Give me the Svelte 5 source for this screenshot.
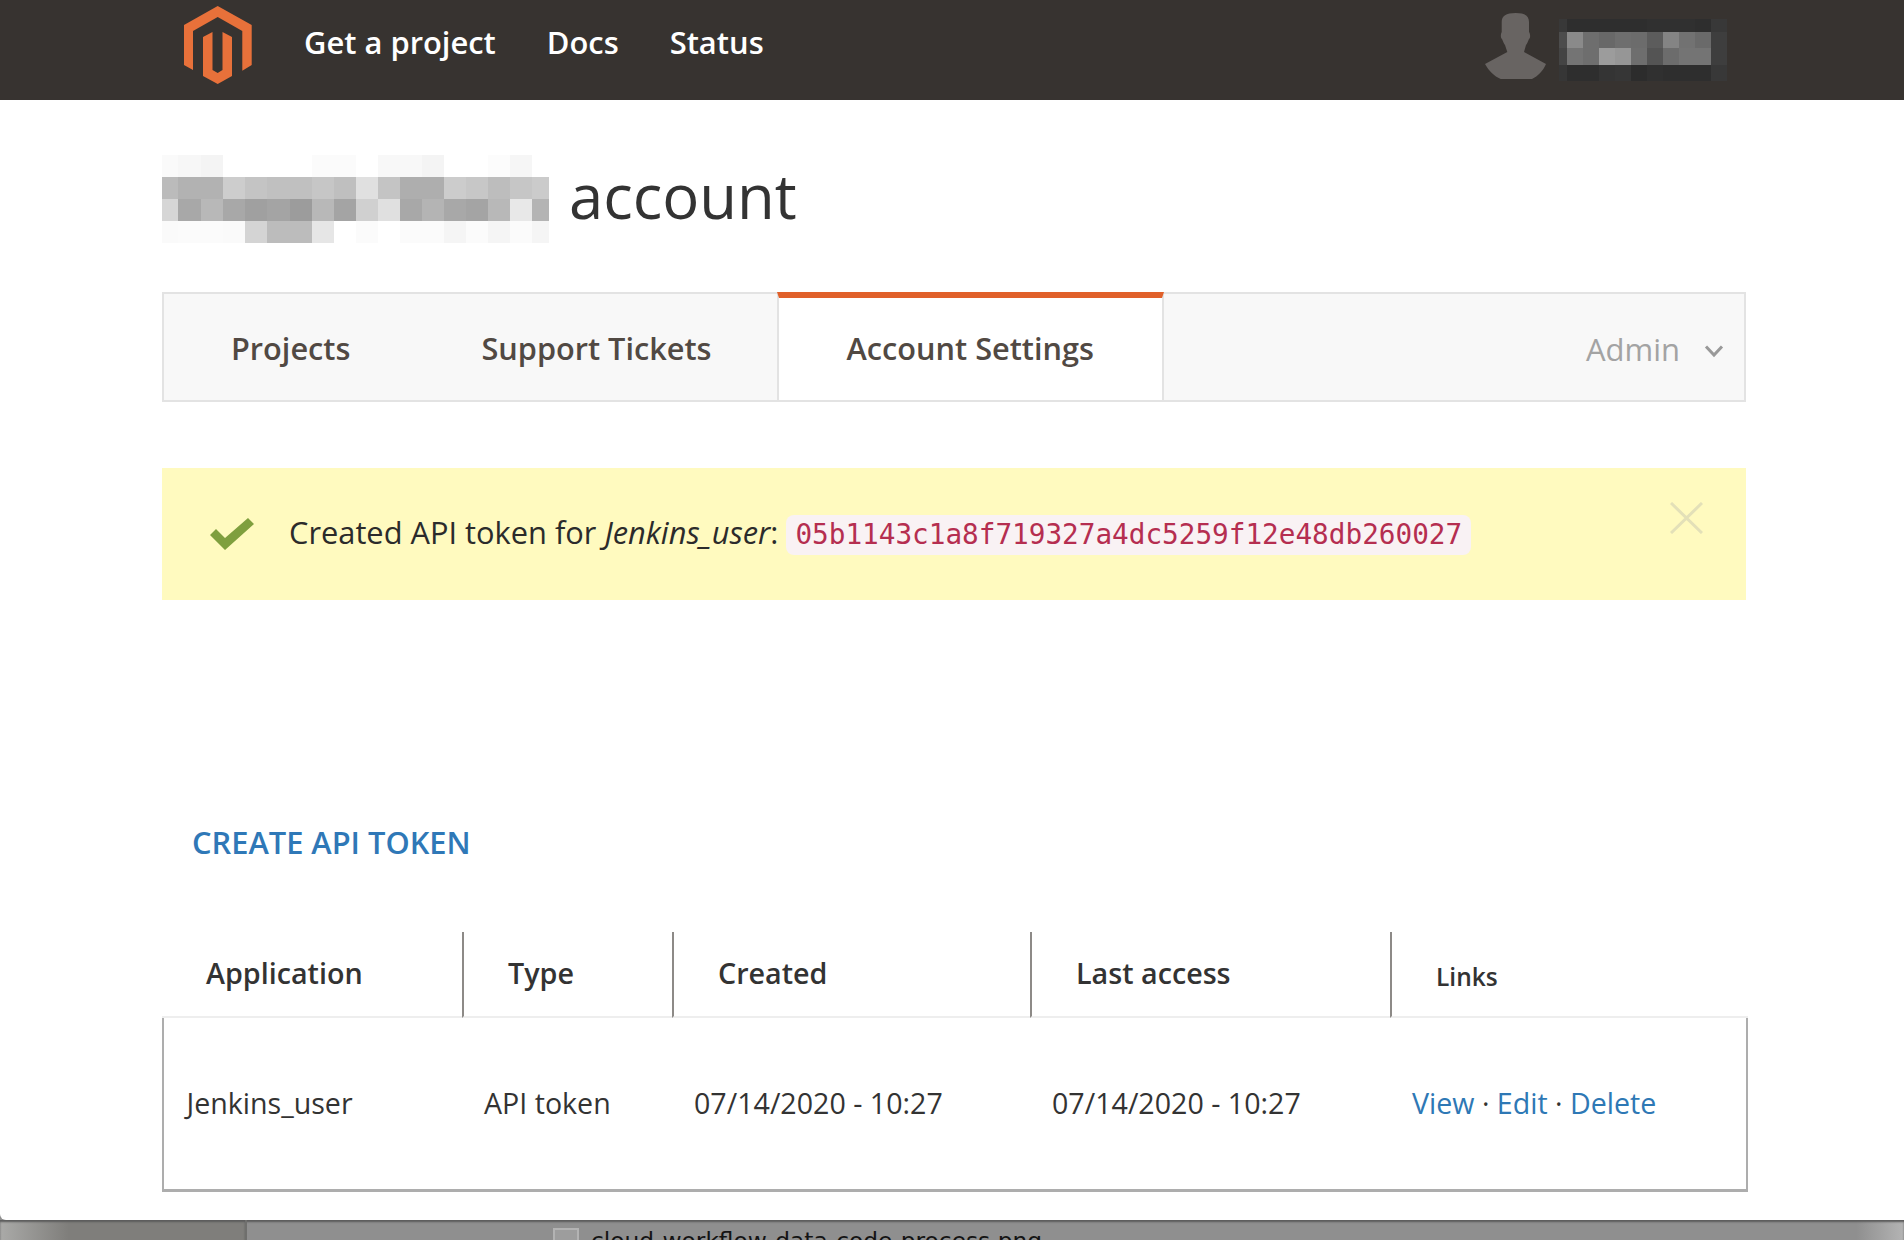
<script lang="ts">
	const navLinks = ['Get a project', 'Docs', 'Status'];

	// pixelated name that hides the account owner
	const mosaicCols = [16, 23, 22, 22, 22, 23, 22, 22, 22, 22, 22, 22, 22, 22, 22, 22, 22, 17];
	const mosaicRows = [
		['fa', 'f7', 'f4', 'ff', 'ff', 'ff', 'ff', 'fb', 'fb', 'ff', 'f8', 'f8', 'f4', 'ff', 'ff', 'fc', 'f6', 'ff'],
		['bb', 'b2', 'b2', 'cd', 'c4', 'c0', 'c0', 'c6', 'bf', 'e0', 'c4', 'ae', 'ae', 'cc', 'c7', 'bd', 'c6', 'cb'],
		['d6', 'a8', 'b8', 'a8', 'a0', 'a4', '9c', 'b8', 'a4', 'd0', 'e0', 'a8', 'b4', 'a8', 'a4', 'b8', 'e8', 'b4'],
		['fa', 'fb', 'fb', 'fa', 'd4', 'bc', 'bc', 'e6', 'ff', 'fb', 'ff', 'fb', 'fb', 'f5', 'fb', 'f5', 'fb', 'f5']
	];

	const userCols = [8, 16, 16, 16, 16, 16, 16, 16, 16, 16, 16];
	const userRowHeights = [13, 16, 17, 16];
	const userRows = [
		['38', '2e', '2e', '2e', '2e', '2e', '30', '30', '30', '2e', '38'],
		['4c', '8a', '6e', '68', '6e', '6c', '5c', '84', '72', '6a', '3e'],
		['44', '74', '6e', '9c', '96', '6e', '54', '6c', '74', '74', '3e'],
		['36', '2e', '2e', '34', '36', '2c', '30', '2e', '2e', '2e', '38']
	];

	const grey = (v: string) => `#${v}${v}${v}`;
</script>

<div class="window">
	<header class="topbar">
		<svg class="logo" viewBox="0 0 68 78" aria-label="Magento">
			<path d="M33.7 0 67.7 19V59L58.3 64.7V25L33.7 11 9 25V64L0 59V19Z" fill="#e8713a" />
			<path d="M19 31 28.5 26V64L33.7 67 38.5 64V26L48 31V70L33.7 78 19 70Z" fill="#e8713a" />
		</svg>
		<nav class="nav">
			{#each navLinks as link}
				<a href="#top">{link}</a>
			{/each}
		</nav>
		<div class="user">
			<svg class="avatar" viewBox="0 0 62 66">
				<path d="M30.7 0C40 0 44 3 44 9V19C45.5 21 45.5 25 44 26 43 28 42 31 41 32L39 39 61 51C58 58 53 63 47 66H15.7C9 63 4 58 0 51L22.3 39 20 32C19 31 18 28 17 26 15.5 25 15.5 21 16.7 19V9C16.7 3 21 0 30.7 0Z" fill="#686462" />
			</svg>
			<div class="mosaic small" aria-hidden="true">
				{#each userRows as row, r}
					<div class="mosaic-row" style="height:{userRowHeights[r]}px">
						{#each row as v, i}
							<span style="width:{userCols[i]}px;background:{grey(v)}"></span>
						{/each}
					</div>
				{/each}
			</div>
		</div>
	</header>

	<main class="content">
		<div class="title">
			<div class="mosaic big" aria-hidden="true">
				{#each mosaicRows as row}
					<div class="mosaic-row">
						{#each row as v, i}
							<span style="width:{mosaicCols[i]}px;background:{grey(v)}"></span>
						{/each}
					</div>
				{/each}
			</div>
			<h1>account</h1>
		</div>

		<div class="tabs">
			<a class="tab" href="#top">Projects</a>
			<a class="tab" href="#top">Support Tickets</a>
			<a class="tab active" href="#top">Account Settings</a>
			<div class="admin">
				<span>Admin</span>
				<svg viewBox="0 0 20 14" class="chevron"><path d="M2 2.5 10 11 18 2.5" /></svg>
			</div>
		</div>

		<div class="alert">
			<svg class="check" viewBox="0 0 44 32"><path d="M0 17 6 11 15 20 38 0 44 6 15 32Z" fill="#7f9f3e" /></svg>
			<p>Created API token for <em>Jenkins_user</em>: <code>05b1143c1a8f719327a4dc5259f12e48db260027</code></p>
			<svg class="close" viewBox="0 0 33 32"><path d="M1 1 32 31M32 1 1 31" /></svg>
		</div>

		<a class="create" href="#top">Create API token</a>

		<table>
			<colgroup>
				<col style="width:300px" />
				<col style="width:210px" />
				<col style="width:358px" />
				<col style="width:360px" />
				<col style="width:358px" />
			</colgroup>
			<thead>
				<tr>
					<th>Application</th>
					<th>Type</th>
					<th>Created</th>
					<th>Last access</th>
					<th class="links-head">Links</th>
				</tr>
			</thead>
			<tbody>
				<tr>
					<td>Jenkins_user</td>
					<td>API token</td>
					<td>07/14/2020 - 10:27</td>
					<td>07/14/2020 - 10:27</td>
					<td><a href="#top">View</a> · <a href="#top">Edit</a> · <a href="#top">Delete</a></td>
				</tr>
			</tbody>
		</table>
	</main>
</div>

<div class="desktop">
	<div class="sidebar"></div>
	<div class="files">
		<span class="file-icon"></span>
		<span class="file-name">cloud-workflow-data-code-process.png</span>
	</div>
</div>

<style>
	:global(body) {
		margin: 0;
		background: #8f8f8f;
		overflow: hidden;
	}

	.window {
		height: 1220px;
		background: #fff;
		border-bottom-left-radius: 6px;
		font-family: 'Open Sans', sans-serif;
		color: #333;
		overflow: hidden;
	}

	.topbar {
		height: 100px;
		background: #373330;
		display: flex;
		align-items: flex-start;
		padding-left: 184px;
		box-sizing: border-box;
	}

	.logo {
		width: 68px;
		height: 78px;
		margin-top: 6px;
		flex: none;
	}

	.nav {
		display: flex;
		gap: 51px;
		margin-left: 52px;
		margin-top: 21px;
	}

	.nav a {
		color: #fff;
		font-size: 30.9px;
		font-weight: 600;
		line-height: 42px;
		text-decoration: none;
	}

	.user {
		display: flex;
		align-items: flex-start;
		margin-left: 721px;
	}

	.avatar {
		width: 62px;
		height: 66px;
		margin-top: 13px;
		flex: none;
	}

	.mosaic-row {
		display: flex;
	}

	.mosaic-row span {
		display: block;
		height: 100%;
	}

	.mosaic.small {
		margin: 19px 0 0 12px;
	}

	.mosaic.big .mosaic-row {
		height: 22px;
	}

	.content {
		width: 1584px;
		margin-left: 162px;
	}

	.title {
		display: flex;
		align-items: flex-start;
		height: 192px;
		padding-top: 55px;
		box-sizing: border-box;
	}

	h1 {
		margin: -3px 0 0 20px;
		font-size: 61.6px;
		font-weight: 400;
		line-height: 86px;
	}

	.tabs {
		display: flex;
		height: 110px;
		box-sizing: border-box;
		background: #f8f8f8;
		border: 2px solid #e3e3e3;
	}

	.tab {
		display: block;
		padding: 0 64px 0 67px;
		margin-top: -2px;
		height: 108px;
		box-sizing: border-box;
		font-size: 30.7px;
		font-weight: 600;
		line-height: 112px;
		color: #514943;
		text-decoration: none;
	}

	.tab.active {
		background: #fff;
		margin-left: 1px;
		padding: 0 68px;
		border-left: 2px solid #e3e3e3;
		border-right: 2px solid #e3e3e3;
		border-top: 6px solid #e0602a;
		line-height: 100px;
	}

	.admin {
		margin-left: auto;
		display: flex;
		align-items: center;
		gap: 24px;
		padding: 4px 20px 0 0;
		font-size: 31px;
		color: #a3a3a3;
	}

	.chevron {
		width: 20px;
		height: 14px;
		margin-top: 3px;
		fill: none;
		stroke: #999;
		stroke-width: 3;
	}

	.alert {
		display: flex;
		align-items: center;
		position: relative;
		height: 132px;
		margin-top: 66px;
		padding-left: 48px;
		background: #fffabf;
	}

	.check {
		width: 44px;
		height: 32px;
		flex: none;
	}

	.alert p {
		margin: -2px 0 0 35px;
		font-size: 30.8px;
		color: #2b2b2b;
	}

	code {
		display: inline-block;
		padding: 0 9px;
		border-radius: 8px;
		background: #f9f2f4;
		color: #b52e50;
		font-family: 'DejaVu Sans Mono', monospace;
		font-size: 27.7px;
		line-height: 40px;
	}

	.close {
		position: absolute;
		top: 34px;
		right: 43px;
		width: 33px;
		height: 32px;
		fill: none;
		stroke: #e3e0b8;
		stroke-width: 3;
	}

	.create {
		display: block;
		margin: 221px 0 0 30px;
		font-size: 30.8px;
		font-weight: 600;
		line-height: 42px;
		text-transform: uppercase;
		color: #2f78b7;
		text-decoration: none;
	}

	table {
		width: 1586px;
		margin-top: 69px;
		table-layout: fixed;
		border-collapse: separate;
		border-spacing: 0;
	}

	th {
		height: 86px;
		box-sizing: border-box;
		padding: 0 0 4px 44px;
		border-left: 2px solid #8d8a87;
		border-bottom: 2px solid #eee;
		font-size: 28.7px;
		font-weight: 600;
		text-align: left;
		color: #333;
	}

	th:first-child {
		border-left: 0;
	}

	th.links-head {
		font-size: 24.5px;
		padding: 4px 0 0 44px;
	}

	td {
		height: 174px;
		box-sizing: border-box;
		padding: 0 0 2px 22px;
		border-bottom: 3px solid #adadad;
		font-size: 28.6px;
		color: #333;
	}

	td:first-child {
		border-left: 2px solid #adadad;
		padding-left: 22.5px;
	}

	td:last-child {
		border-right: 2px solid #adadad;
	}

	td a {
		color: #2e78b5;
		text-decoration: none;
	}

	.desktop {
		display: flex;
		height: 20px;
		overflow: hidden;
		background: linear-gradient(to right, #8f8f8f 97.5%, #b4b4b4);
		box-shadow: inset 0 2px 2px #5c5c5c;
	}

	.sidebar {
		width: 245px;
		flex: none;
		background: linear-gradient(to right, #aaaaa8, #7f7e7b 28%);
		border-right: 2px solid #6f6f6d;
		box-shadow: inset 0 2px 2px #5c5c5c;
	}

	.files {
		display: flex;
		gap: 12px;
		margin-left: 306px;
		padding-top: 8px;
	}

	.file-icon {
		width: 26px;
		height: 30px;
		box-sizing: border-box;
		background: #9d9d9d;
		border: 2px solid #b3b3b3;
	}

	.file-name {
		font-family: 'DejaVu Sans', sans-serif;
		font-size: 23.3px;
		line-height: 26px;
		color: #141414;
		white-space: nowrap;
	}
</style>
